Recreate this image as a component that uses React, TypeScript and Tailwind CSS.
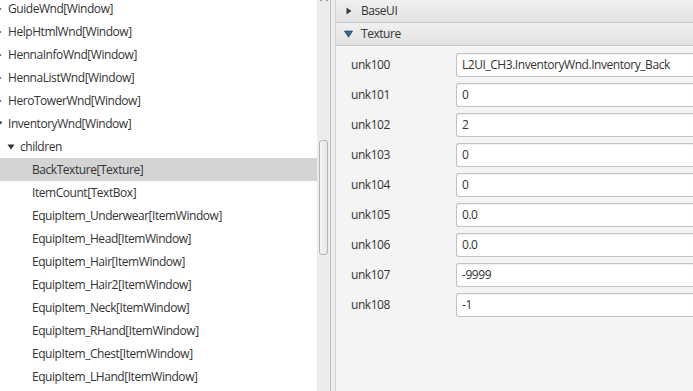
import { ReactNode } from "react";

type TreeRow = { label: string; level: number; arrow?: "right" | "down"; selected?: boolean };

const treeRows: TreeRow[] = [
  { label: "GuideWnd[Window]", level: 0, arrow: "right" },
  { label: "HelpHtmlWnd[Window]", level: 0, arrow: "right" },
  { label: "HennaInfoWnd[Window]", level: 0, arrow: "right" },
  { label: "HennaListWnd[Window]", level: 0, arrow: "right" },
  { label: "HeroTowerWnd[Window]", level: 0, arrow: "right" },
  { label: "InventoryWnd[Window]", level: 0, arrow: "down" },
  { label: "children", level: 1, arrow: "down" },
  { label: "BackTexture[Texture]", level: 2, selected: true },
  { label: "ItemCount[TextBox]", level: 2 },
  { label: "EquipItem_Underwear[ItemWindow]", level: 2 },
  { label: "EquipItem_Head[ItemWindow]", level: 2 },
  { label: "EquipItem_Hair[ItemWindow]", level: 2 },
  { label: "EquipItem_Hair2[ItemWindow]", level: 2 },
  { label: "EquipItem_Neck[ItemWindow]", level: 2 },
  { label: "EquipItem_RHand[ItemWindow]", level: 2 },
  { label: "EquipItem_Chest[ItemWindow]", level: 2 },
  { label: "EquipItem_LHand[ItemWindow]", level: 2 },
];

const props: [string, string][] = [
  ["unk100", "L2UI_CH3.InventoryWnd.Inventory_Back"],
  ["unk101", "0"],
  ["unk102", "2"],
  ["unk103", "0"],
  ["unk104", "0"],
  ["unk105", "0.0"],
  ["unk106", "0.0"],
  ["unk107", "-9999"],
  ["unk108", "-1"],
];

function Arrow({ dir, color = "#333333" }: { dir: "right" | "down"; color?: string }) {
  return dir === "down" ? (
    <svg width="8" height="6" viewBox="0 0 8 6">
      <path d="M0.5 0.5 H7.5 L4 5.5 Z" fill={color} />
    </svg>
  ) : (
    <svg width="6" height="8" viewBox="0 0 6 8">
      <path d="M0.5 0.5 V7.5 L5.5 4 Z" fill={color} />
    </svg>
  );
}

function Row({ row }: { row: TreeRow }) {
  // level 0 is scrolled slightly off the left edge
  return (
    <div className={`flex h-[23px] items-center ${row.selected ? "bg-[#d4d4d4]" : ""}`}>
      <div className="flex shrink-0" style={{ marginLeft: row.level * 12 - 10 }}>
        <div className="flex w-[18px] shrink-0 items-center justify-center">
          {row.arrow && <Arrow dir={row.arrow} />}
        </div>
      </div>
      <span className="whitespace-nowrap">{row.label}</span>
    </div>
  );
}

function Header({ icon, children }: { icon: ReactNode; children: ReactNode }) {
  return (
    <div className="flex h-[23px] items-center gap-[8px] border-b border-[#c8c8c8] bg-gradient-to-b from-[#f0f0f0] to-[#e2e2e2] pl-[8px]">
      <div className="flex w-[9px] justify-center">{icon}</div>
      <span>{children}</span>
    </div>
  );
}

export default function App() {
  return (
    <div
      className="flex h-[391px] w-[693px] overflow-hidden bg-white text-[12px] tracking-[-0.45px] text-[#333333]"
      style={{ fontFamily: '"Open Sans", "Noto Sans", sans-serif' }}
    >
      {/* tree */}
      <div className="w-[317px] shrink-0 overflow-hidden bg-white">
        <div className="mt-[-3px]">
          {treeRows.map((r) => (
            <Row key={r.label} row={r} />
          ))}
        </div>
      </div>

      {/* vertical scrollbar */}
      <div className="w-[14px] shrink-0 border-r border-[#bdbdbd] bg-[#ececec]">
        <div className="mt-[-4px] flex justify-center">
          <svg width="8" height="6" viewBox="0 0 8 6">
            <path d="M0.5 5 L4 1.5 L7.5 5" fill="none" stroke="#8a8a8a" strokeWidth="1.2" />
          </svg>
        </div>
        <div className="mx-[2px] mt-[138px] h-[115px] rounded-[3px] border border-[#b4b4b4] bg-gradient-to-r from-[#f4f4f4] to-[#e6e6e6]" />
      </div>

      {/* split divider */}
      <div className="w-[5px] shrink-0 border-r border-[#d2d2d2] bg-[#eeeeee]" />

      {/* properties */}
      <div className="flex min-w-0 flex-1 flex-col bg-[#f4f4f4]">
        <Header icon={<Arrow dir="right" color="#3a3a3a" />}>BaseUI</Header>
        <Header
          icon={
            <svg width="10" height="8" viewBox="0 0 10 8">
              <path d="M0.5 0.8 H9.5 L5 7.5 Z" fill="#2f6f9a" stroke="#1e3a52" strokeWidth="0.8" />
            </svg>
          }
        >
          Texture
        </Header>
        <div className="flex flex-col gap-[6px] pt-[7px] pl-[15px]">
          {props.map(([k, v]) => (
            <div key={k} className="flex h-[24px] items-center">
              <span className="w-[105px] shrink-0">{k}</span>
              <div className="flex h-[24px] flex-1 items-center rounded-l-[3px] border border-r-0 border-[#c2c2c2] bg-white pl-[5px] whitespace-nowrap shadow-[inset_0_1px_1px_rgba(0,0,0,0.06)]">
                {v}
              </div>
            </div>
          ))}
        </div>
      </div>
    </div>
  );
}
